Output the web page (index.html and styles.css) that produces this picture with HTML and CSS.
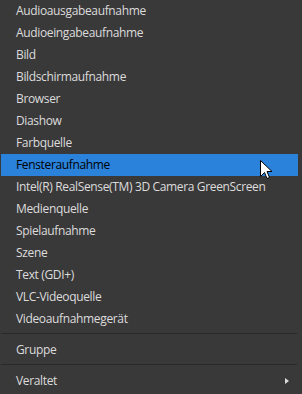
FILE: index.html
```html
<!DOCTYPE html>
<html>
  <head>
    <meta charset="UTF-8" />
    <title>Quelle hinzufügen</title>
    <link rel="stylesheet" href="styles.css">
  </head>
  <body>
    <div class="menu">
      <div class="item">Audioausgabeaufnahme</div>
      <div class="item">Audioeingabeaufnahme</div>
      <div class="item">Bild</div>
      <div class="item">Bildschirmaufnahme</div>
      <div class="item">Browser</div>
      <div class="item">Diashow</div>
      <div class="item">Farbquelle</div>
      <div class="item active">Fensteraufnahme</div>
      <div class="item">Intel(R) RealSense(TM) 3D Camera GreenScreen</div>
      <div class="item">Medienquelle</div>
      <div class="item">Spielaufnahme</div>
      <div class="item">Szene</div>
      <div class="item">Text (GDI+)</div>
      <div class="item">VLC-Videoquelle</div>
      <div class="item">Videoaufnahmegerät</div>
      <div class="separator"></div>
      <div class="item">Gruppe</div>
      <div class="separator"></div>
      <div class="item submenu">
        <span>Veraltet</span>
        <span class="arrow"></span>
      </div>
    </div>

    <svg class="cursor" width="13" height="20" viewBox="0 0 13 20">
      <path d="M0.5 0.5 L0.5 16.5 L4.5 12.5 L7 18.5 L9.5 17.5 L7 11.5 L12 11.5 Z"
            fill="#fff" stroke="#000" stroke-width="1" />
    </svg>
  </body>
</html>
```

FILE: styles.css
```css
body {
  margin: 0;
  background-color: #3a393a;
  font-family: "Open Sans", "Noto Sans", sans-serif;
  font-size: 12px;
  letter-spacing: -0.35px;
  color: #dcdcdc;
}

.menu {
  width: 297px;
  padding: 0 4px 2px 1px;
  background-color: #3a393a;
}

.item {
  height: 22px;
  line-height: 22px;
  padding-left: 15px;
  white-space: nowrap;
}

.item.active {
  background-color: #2a82da;
  color: #000;
}

.separator {
  height: 1px;
  margin: 3px 1px 5px 0;
  background-color: #2a292a;
}

.submenu {
  display: flex;
  justify-content: space-between;
  align-items: center;
  padding-right: 9px;
}

.arrow {
  width: 0;
  height: 0;
  border-top: 3.5px solid transparent;
  border-bottom: 3.5px solid transparent;
  border-left: 4px solid #dcdcdc;
}

.cursor {
  position: absolute;
  left: 260px;
  top: 160px;
}
```
